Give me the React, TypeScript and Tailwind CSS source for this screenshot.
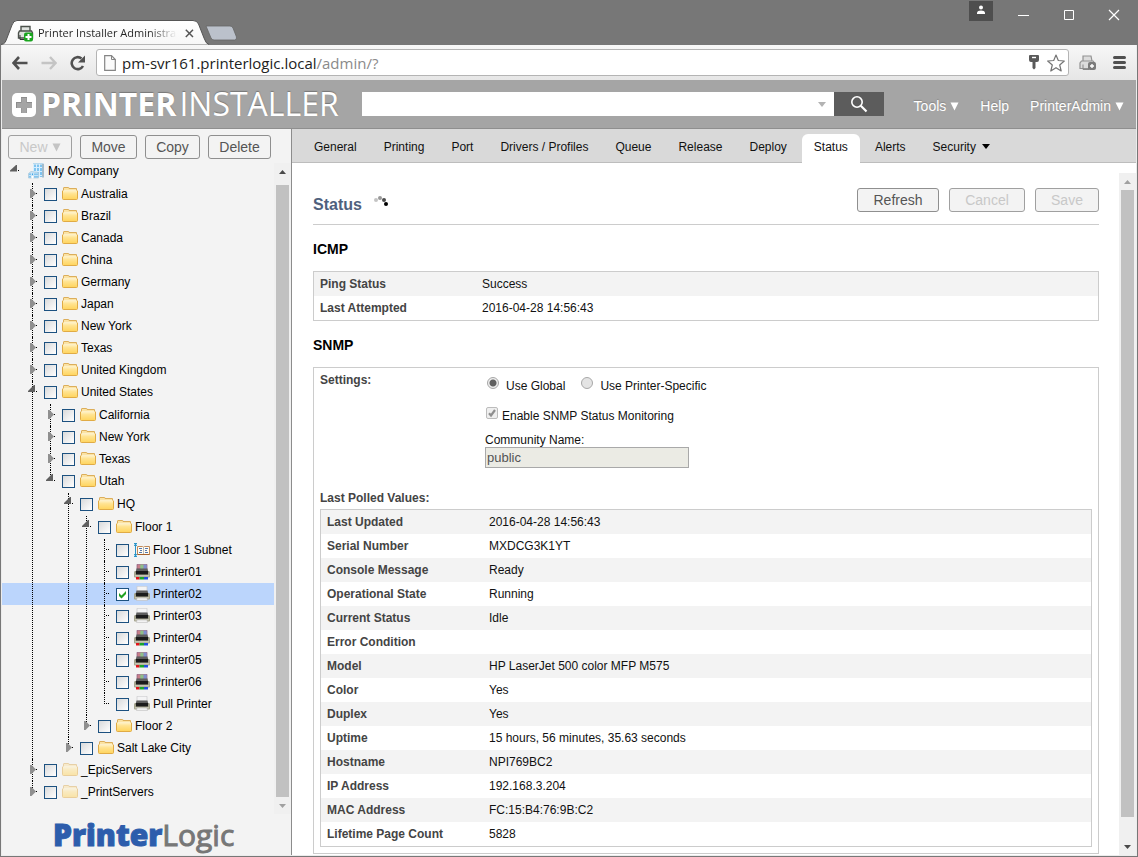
import React from "react";

type IconKind = "company" | "folder" | "faded" | "subnet" | "color" | "mono";

interface TreeNode {
  name: string;
  icon: IconKind;
  collapsed?: boolean;
  checked?: boolean;
  children?: TreeNode[];
}

const folder = (name: string): TreeNode => ({ name, icon: "folder", collapsed: true });

const regions: TreeNode[] = [
  folder("Australia"),
  folder("Brazil"),
  folder("Canada"),
  folder("China"),
  folder("Germany"),
  folder("Japan"),
  folder("New York"),
  folder("Texas"),
  folder("United Kingdom"),
  {
    name: "United States",
    icon: "folder",
    children: [
      folder("California"),
      folder("New York"),
      folder("Texas"),
      {
        name: "Utah",
        icon: "folder",
        children: [
          {
            name: "HQ",
            icon: "folder",
            children: [
              {
                name: "Floor 1",
                icon: "folder",
                children: [
                  { name: "Floor 1 Subnet", icon: "subnet" },
                  { name: "Printer01", icon: "color" },
                  { name: "Printer02", icon: "mono", checked: true },
                  { name: "Printer03", icon: "mono" },
                  { name: "Printer04", icon: "color" },
                  { name: "Printer05", icon: "color" },
                  { name: "Printer06", icon: "color" },
                  { name: "Pull Printer", icon: "mono" },
                ],
              },
              folder("Floor 2"),
            ],
          },
          folder("Salt Lake City"),
        ],
      },
    ],
  },
  { name: "_EpicServers", icon: "faded", collapsed: true },
  { name: "_PrintServers", icon: "faded", collapsed: true },
];

function NodeIcon({ kind }: { kind: IconKind }) {
  if (kind === "folder" || kind === "faded") {
    return (
      <svg width="16" height="16" viewBox="0 0 16 16" className={kind === "faded" ? "opacity-50" : ""}>
        <defs>
          <linearGradient id="fold" x1="0" y1="0" x2="0" y2="1">
            <stop offset="0" stopColor="#fff3cc" />
            <stop offset=".35" stopColor="#ffe391" />
            <stop offset="1" stopColor="#ffd45c" />
          </linearGradient>
        </defs>
        <path d="M1.500 5V2Q1.500 1.500 2 1.500H6.500Q7 1.500 7 2V2.500H14.500V5Z" fill="#fbe3a4" stroke="#dcae5b" />
        <path d="M.5 5Q.5 4.500 1.500 4.500H14.500Q15.500 4.500 15.500 5V12.500Q15.500 13.500 14.500 13.500H1.500Q.5 13.500.5 12.500Z" fill="url(#fold)" stroke="#e0ab45" />
        <path d="M1.500 4.500H14.500" stroke="#fdf0c8" />
      </svg>
    );
  }
  if (kind === "subnet") {
    return (
      <svg width="16" height="16" viewBox="0 0 16 16">
        <path d="M1.500 1V15M0 1.500H3M0 14.500H3M.3 4L1.500 2L2.700 4M.3 12L1.500 14L2.700 12" stroke="#2994c8" fill="none" />
        <path d="M3.500 4.500H8.500L9.500 5.200L10.500 4.500H15.500V12.500H3.500Z" fill="#fffaf0" stroke="#c08a5a" />
        <path d="M3.500 12.500H15.500" stroke="#a5612c" />
        <path d="M5 6.500H8M6 8.500H8M5 10.500H8M11 6.500H14M11 8.500H13M11 10.500H14" stroke="#5378ae" />
        <path d="M9.500 5V12" stroke="#a9a9a9" strokeWidth=".8" />
      </svg>
    );
  }
  if (kind === "company") {
    return (
      <svg width="16" height="16" viewBox="0 0 16 16">
        <path d="M5 .5H15.500V14H5Z" fill="#7fc4f0" />
        <path d="M5 .5H15.500V2H5Z" fill="#b9d9ec" />
        <path d="M5.500 1V9M8.500 1V14M11.500 1V14M5 4.500H15M5 8.500H15M10 12.500H15" stroke="#d8efff" />
        <path d="M15 1V14.500" stroke="#a5bccb" strokeWidth="2" />
        <path d="M.5 10.500L3 8.500L10.500 9.500V15H.5Z" fill="#c8e4f7" stroke="#a4c4d9" strokeWidth=".7" />
        <path d="M2 10.500V12M4.500 10.500V12M7 10.500V12M9 10.500V12M2 13V14.500M7 13V14.500M9 13V14.500" stroke="#3fa5e4" />
        <path d="M3.500 13H5.500V15.500H3.500Z" fill="#fff" />
      </svg>
    );
  }
  const color = kind === "color";
  return (
    <svg width="16" height="16" viewBox="0 0 16 16">
      <path d="M3 .3H13V5H3Z" fill={color ? "#c67f88" : "#f4f4f5"} stroke={color ? "#8a5a80" : "#c9c9cc"} strokeWidth=".7" />
      {color && <path d="M6.300.6H9.600V5H6.300Z" fill="#8cc08a" />}
      {color && <path d="M9.600.6H12.700V5H9.600Z" fill="#7c90d0" />}
      <path d="M1 7Q0 7 0 8.500V12.500Q0 13.500 1 13.500H15Q16 13.500 16 12.500V8.500Q16 7 15 7Z" fill="#a5a48e" />
      <path d="M2.500 4.500H13.500L14.500 8.500H1.500Z" fill="#5e5e5e" />
      <path d="M2 7H14V10.500H2Z" fill="#1c1c1c" />
      <path d="M1 11H15V12.500H1Z" fill="#c6c5b3" />
      {color ? (
        <>
          <path d="M2 13H5.600V15.500H2Z" fill="#e31219" />
          <path d="M5.600 13H10V15.500H5.600Z" fill="#19a52c" />
          <path d="M10 13H14V15.500H10Z" fill="#234fe0" />
        </>
      ) : (
        <path d="M3 12H13L13.500 14.500H2.500Z" fill="#f3f3f3" stroke="#b4b4b4" strokeWidth=".5" />
      )}
    </svg>
  );
}

function Twisty({ node }: { node: TreeNode }) {
  return (
    <svg width="14" height="22" viewBox="0 0 14 22" className="relative z-20 overflow-visible">
      {node.collapsed && <path d="M0 6H1.500L6 10.500L1.500 15H0Z" fill="#8f8f8f" />}
      {node.children && <path d="M-2 11H5V4H4L-2 10Z" fill="#606060" />}
      {node.collapsed || node.children ? (
        <path d="M6 10H7V11H6Z" fill="#000" />
      ) : (
        <path d="M4 10H5V11H4ZM6 10H7V11H6Z" fill="#000" />
      )}
    </svg>
  );
}

function Branch({ nodes, depth }: { nodes: TreeNode[]; depth: number }) {
  const indent = 10 + depth * 18;
  return (
    <ul className="pt-px">
      {nodes.map((node, i) => {
        const id = `node-${depth}-${node.name.replace(/\s/g, "")}`;
        return (
          <li key={node.name} className="relative">
            <span
              className={
                i === nodes.length - 1
                  ? "absolute top-0 z-10 h-[11px] border-l border-dotted border-black"
                  : "absolute top-0 z-10 h-full border-l border-dotted border-black"
              }
              style={{ left: indent + 2 }}
            />
            <div
              className={node.checked ? "flex h-[22px] items-center bg-[#bbd5fc]" : "flex h-[22px] items-center"}
              style={{ paddingLeft: indent }}
            >
              <Twisty node={node} />
              <span className="relative mt-px flex">
                <input
                  id={id}
                  type="checkbox"
                  defaultChecked={node.checked}
                  className="size-[13px] appearance-none border border-[#1c5180] bg-linear-to-br from-[#d9dadb] to-white checked:from-white"
                />
                {node.checked && (
                  <svg width="13" height="13" viewBox="0 0 13 13" className="pointer-events-none absolute inset-0">
                    <path d="M3 5L5.500 7.500L10 3V6L5.500 10.500L3 8Z" fill="#21a121" />
                  </svg>
                )}
              </span>
              <label htmlFor={id} className="ml-[5px] flex items-center gap-[3px]">
                <NodeIcon kind={node.icon} />
                {node.name}
              </label>
            </div>
            {node.children && <Branch nodes={node.children} depth={depth + 1} />}
          </li>
        );
      })}
    </ul>
  );
}

function Button({ children, disabled, className }: { children: React.ReactNode; disabled?: boolean; className: string }) {
  return (
    <button
      disabled={disabled}
      className={`h-6 rounded-[3px] border border-[#8f8f8f] bg-[#f3f3f3] text-sm leading-5 text-[#555] disabled:border-[#a0a0a0] disabled:text-[#c8c8c8] ${className}`}
    >
      {children}
    </button>
  );
}

function Arrow({ up, color }: { up?: boolean; color: string }) {
  return (
    <svg width="17" height="17" viewBox="0 0 17 17">
      <path d={up ? "M5 11L8.5 7L12 11Z" : "M5 7L8.5 11L12 7Z"} fill={color} />
    </svg>
  );
}

function Caption() {
  return (
    <div className="flex h-[45px] items-start bg-[#777]">
      <div className="relative h-[45px] w-[208px]">
        <svg width="208" height="45" viewBox="0 0 208 45" className="absolute inset-0">
          <defs>
            <linearGradient id="tab" x1="0" y1="0" x2="0" y2="1">
              <stop offset="0" stopColor="#fff" />
              <stop offset="1" stopColor="#f7f7f7" />
            </linearGradient>
          </defs>
          <path d="M0 44.5C4 44 4.500 42 6 38L11 25Q12.500 20.500 16 20.500H192Q196 20.500 197.500 24L203 38Q205 44 208 44.500" fill="url(#tab)" stroke="#555" />
        </svg>
        <div className="relative mt-6 flex items-center pl-4">
          <svg width="17" height="17" viewBox="0 0 17 17" className="shrink-0">
            <path d="M4 6V1.500H13V6M2.500 6H14.500L15.500 8V13H1.500V8Z" fill="#dfe3df" stroke="#4b514b" strokeWidth="1.400" />
            <path d="M3 10V14.500H8" fill="none" stroke="#333" />
            <rect x="7" y="7.500" width="9" height="9" rx="2" fill="#19a51e" />
            <path d="M11.500 9V15M8.500 12H14.500" stroke="#fff" strokeWidth="2" />
          </svg>
          <span className="ml-1 w-[139px] bg-linear-to-r from-[#222] from-80% to-transparent bg-clip-text font-['Open_Sans',sans-serif] text-[11px] leading-[18px] whitespace-nowrap text-transparent">
            Printer Installer Administra
          </span>
          <button aria-label="Close tab" className="ml-2">
            <svg width="9" height="9" viewBox="0 0 9 9">
              <path d="M.8.8L8 8M8 .8L.8 8" stroke="#555" strokeWidth="1.500" />
            </svg>
          </button>
        </div>
      </div>
      <button aria-label="New tab" className="-ml-1 mt-[25px]">
        <svg width="32" height="16" viewBox="0 0 32 16">
          <path d="M1 1H25Q27 1 28 3L31.500 12Q32 15 29.500 15H9Q7 15 6 13Z" fill="#bbc1cb" stroke="#666" strokeWidth=".8" />
        </svg>
      </button>
      <div className="flex-1" />
      <button aria-label="Profile" className="flex h-[21px] w-6 justify-center bg-[#4e4e4e] pt-[5px]">
        <svg width="10" height="10" viewBox="0 0 10 10" fill="#fff">
          <circle cx="5" cy="2.600" r="2" />
          <path d="M1 9V7.500Q1.500 5.500 5 5.500T9 7.500V9Z" />
        </svg>
      </button>
      <div className="flex gap-[33px] pt-[9px] pr-[17px] pl-[25px]">
        <button aria-label="Minimize">
          <svg width="12" height="12"><path d="M0 6.500H11" stroke="#fff" /></svg>
        </button>
        <button aria-label="Maximize">
          <svg width="12" height="12"><path d="M1.500 1.500H10.500V10.500H1.500Z" stroke="#fff" fill="none" /></svg>
        </button>
        <button aria-label="Close">
          <svg width="12" height="12"><path d="M1 1L11 11M11 1L1 11" stroke="#fff" strokeWidth="1.200" /></svg>
        </button>
      </div>
    </div>
  );
}

function AddressBar() {
  return (
    <div className="flex h-[35px] items-center bg-linear-to-b from-[#f7f7f7] to-[#e6e6e6] pr-[10px] pl-[10px]">
      <button aria-label="Back">
        <svg width="16" height="14" viewBox="0 0 16 14"><path d="M7 1L1.500 7L7 13M2 7H15.500" fill="none" stroke="#505050" strokeWidth="2.600" /></svg>
      </button>
      <button aria-label="Forward" className="ml-[13px]">
        <svg width="16" height="14" viewBox="0 0 16 14"><path d="M9 1L14.500 7L9 13M14 7H.5" fill="none" stroke="#c4c4c4" strokeWidth="2.400" /></svg>
      </button>
      <button aria-label="Reload" className="ml-3">
        <svg width="18" height="16" viewBox="0 0 18 16">
          <path d="M14 11A6 6 0 1 1 12.500 3.500" fill="none" stroke="#505050" strokeWidth="2.600" />
          <path d="M16 .5V7.500H9Z" fill="#505050" />
        </svg>
      </button>
      <div className="ml-[9px] flex h-[27px] flex-1 items-center rounded-[3px] border border-[#b4b4b4] bg-white pr-[3px] pl-[7px]">
        <svg width="12" height="16" viewBox="0 0 12 16">
          <path d="M.7.7H7.500L11.300 4.500V15.300H.7Z" fill="#fbfbfb" stroke="#858585" strokeWidth="1.200" />
          <path d="M7.500.7V4.500H11.300" fill="none" stroke="#858585" />
        </svg>
        <div className="ml-1.5 flex-1 font-['Open_Sans',sans-serif] text-[15px] leading-5 text-[#222]">
          pm-svr161.printerlogic.local<span className="text-[#8a8a8a]">/admin/?</span>
        </div>
        <svg width="10" height="15" viewBox="0 0 10 15" className="mr-2">
          <path d="M1 0H9Q10 0 10 1V5Q10 7 8 7H6.500V13L5 14.500L3.500 13V7H2Q0 7 0 5V1Q0 0 1 0Z" fill="#5a5a5a" />
          <path d="M3 2.500H7" stroke="#fff" strokeWidth="1.400" />
        </svg>
        <svg width="18" height="18" viewBox="0 0 18 18">
          <path d="M9 1L11.300 6.500L17.300 7L12.700 11L14.200 17L9 13.700L3.800 17L5.300 11L.7 7L6.700 6.500Z" fill="#fff" stroke="#747474" strokeWidth="1.200" strokeLinejoin="round" />
        </svg>
      </div>
      <button aria-label="Printer extension" className="ml-[10px]">
        <svg width="18" height="16" viewBox="0 0 18 16">
          <path d="M4 6V1H12L13 6M2.500 6H14L15.500 8V13.500H1V8Z" fill="#dcdcdc" stroke="#929292" strokeWidth="1.200" />
          <path d="M4 9.500V14.500H10" fill="none" stroke="#888" />
          <rect x="9" y="7" width="8" height="8" rx="2" fill="#7b7b7b" />
          <path d="M13 9V13M11 11H15" stroke="#fff" strokeWidth="1.400" />
        </svg>
      </button>
      <button aria-label="Menu" className="ml-4">
        <svg width="13" height="13" viewBox="0 0 13 13">
          <path d="M1.500 1.500H11.500M1.500 6.500H11.500M1.500 11.500H11.500" stroke="#505050" strokeWidth="3" strokeLinecap="round" />
        </svg>
      </button>
    </div>
  );
}

function Banner() {
  return (
    <header className="flex h-[49px] items-center border-b border-[#8f8f8f] bg-[#a5a5a5] text-white">
      <div className="flex w-[360px] shrink-0 items-center pl-[10px]">
        <svg width="25" height="25" viewBox="0 0 25 25">
          <rect y="1" width="24" height="24" rx="5" fill="#fff" />
          <path d="M12 5V21M4 13H20" stroke="#8c8c8c" strokeWidth="6" />
          <path d="M12 6V21M5 13.500H20" stroke="#a5a5a5" strokeWidth="5" />
        </svg>
        <span className="ml-1 font-['Open_Sans',sans-serif] text-[32px] leading-9 font-bold [text-shadow:0_-1px_1px_#777]">PRINTER</span>
        <span className="ml-[3px] font-['Open_Sans',sans-serif] text-[32px] leading-9 [text-shadow:0_-1px_1px_#777]">INSTALLER</span>
      </div>
      <div className="flex h-6 flex-1">
        <div className="relative flex-1">
          <input aria-label="Search" className="h-6 w-full bg-white px-2 text-sm text-black outline-none" />
          <svg width="8" height="5" viewBox="0 0 8 5" className="absolute top-[10px] right-2"><path d="M0 0H8L4 5Z" fill="#b3b3b3" /></svg>
        </div>
        <button aria-label="Run search" className="flex w-[50px] items-center justify-center bg-[#5c5c5c]">
          <svg width="18" height="18" viewBox="0 0 18 18" fill="none" stroke="#fff">
            <circle cx="7" cy="7" r="5.200" strokeWidth="1.600" />
            <path d="M10.800 10.800L16.500 16.500" strokeWidth="2.200" />
          </svg>
        </button>
      </div>
      <nav className="flex gap-[21px] pt-1 pr-3 pl-[30px] text-sm [text-shadow:0_-1px_1px_#888]">
        {["Tools", "Help", "PrinterAdmin"].map((item) => (
          <a key={item} href="#" className="flex items-center gap-1">
            {item}
            {item !== "Help" && <svg width="9" height="9" viewBox="0 0 9 9"><path d="M.5.5H8.500L4.500 8.500Z" fill="#fff" /></svg>}
          </a>
        ))}
      </nav>
    </header>
  );
}

function Sidebar() {
  return (
    <aside className="flex w-[290px] shrink-0 flex-col border-r border-[#8c8c8c] bg-[#f3f3f3]">
      <div className="flex shrink-0 gap-2 px-1.5 pt-1.5 pb-1">
        <Button disabled className="flex w-16 items-center justify-center gap-1">
          New
          <svg width="9" height="9" viewBox="0 0 9 9"><path d="M.5.5H8.500L4.500 8.500Z" fill="#c4c4c4" /></svg>
        </Button>
        <Button className="w-[57px]">Move</Button>
        <Button className="w-[55px]">Copy</Button>
        <Button className="w-[63px]">Delete</Button>
      </div>
      <div className="flex min-h-0 flex-1">
        <div className="min-w-0 flex-1 overflow-hidden text-xs">
          <div className="flex h-[19px] items-start pl-2">
            <svg width="18" height="16" viewBox="0 0 18 16">
              <path d="M0 8.500H7V2H6L0 7.500Z" fill="#606060" />
              <path d="M8 7H9V8H8Z" fill="#000" />
            </svg>
            <span className="flex items-center gap-1">
              <NodeIcon kind="company" />
              My Company
            </span>
          </div>
          <Branch nodes={regions} depth={1} />
        </div>
        <div className="flex w-[17px] shrink-0 flex-col items-center bg-[#f0f0f0]">
          <Arrow up color="#4a4a4a" />
          <div className="mt-[5px] w-[13px] flex-1 bg-[#c1c1c1]" />
          <Arrow color="#a0a0a0" />
        </div>
      </div>
      <div className="h-[41px] shrink-0 pl-[51px] font-['Open_Sans',sans-serif] text-[30px] leading-[41px] whitespace-nowrap">
        <span className="font-extrabold text-[#2d5dac] [-webkit-text-stroke:1px_#2d5dac]">Printer</span>
        <span className="text-[#777] [-webkit-text-stroke:1px_#777]">Logic</span>
      </div>
    </aside>
  );
}

const tabs = ["General", "Printing", "Port", "Drivers / Profiles", "Queue", "Release", "Deploy", "Status", "Alerts", "Security"];

function Tabs() {
  return (
    <nav className="flex h-[34px] shrink-0 items-end gap-[3px] border-b border-[#bdbdbd] bg-[#d9d9d9] pl-[10px] text-xs text-[#111]">
      {tabs.map((tab) => (
        <a
          key={tab}
          href="#"
          className={
            tab === "Status"
              ? "-mb-px flex h-[29px] items-center rounded-t-md bg-white px-3 pb-1"
              : "flex h-7 items-center gap-1.5 px-3 pb-[3px]"
          }
        >
          {tab}
          {tab === "Security" && <svg width="8" height="5" viewBox="0 0 8 5"><path d="M0 0H8L4 5Z" fill="#000" /></svg>}
        </a>
      ))}
    </nav>
  );
}

function DataTable({ rows }: { rows: [string, string][] }) {
  return (
    <div className="border border-[#ccc]">
      <table className="w-full border-collapse">
        <tbody>
          {rows.map(([label, value]) => (
            <tr key={label} className="h-6 odd:bg-[#f3f3f3]">
              <th scope="row" className="w-[162px] pl-1.5 text-left font-bold text-[#444]">{label}</th>
              <td className="pl-1.5 text-[#111]">{value}</td>
            </tr>
          ))}
        </tbody>
      </table>
    </div>
  );
}

const polled: [string, string][] = [
  ["Last Updated", "2016-04-28 14:56:43"],
  ["Serial Number", "MXDCG3K1YT"],
  ["Console Message", "Ready"],
  ["Operational State", "Running"],
  ["Current Status", "Idle"],
  ["Error Condition", ""],
  ["Model", "HP LaserJet 500 color MFP M575"],
  ["Color", "Yes"],
  ["Duplex", "Yes"],
  ["Uptime", "15 hours, 56 minutes, 35.63 seconds"],
  ["Hostname", "NPI769BC2"],
  ["IP Address", "192.168.3.204"],
  ["MAC Address", "FC:15:B4:76:9B:C2"],
  ["Lifetime Page Count", "5828"],
];

function Radio({ label, checked }: { label: string; checked?: boolean }) {
  const id = label.replace(/\W/g, "");
  return (
    <div className="flex items-start">
      <input
        id={id}
        type="radio"
        name="scope"
        disabled
        defaultChecked={checked}
        className="size-3 appearance-none rounded-full border border-[#a8a8a8] bg-[#e4e4e4] checked:bg-[radial-gradient(circle,#606060_0_3px,#eee_4px)]"
      />
      <label htmlFor={id} className="mt-0.5 ml-[7px] leading-[14px]">{label}</label>
    </div>
  );
}

function Settings() {
  return (
    <div className="flex text-[#111]">
      <div className="w-[165px] shrink-0 pt-[5px] font-bold leading-[14px] text-[#444]">Settings:</div>
      <div>
        <div className="flex gap-4 pt-[9px] pl-0.5">
          <Radio label="Use Global" checked />
          <Radio label="Use Printer-Specific" />
        </div>
        <div className="mt-[14px] flex items-start pl-px">
          <span className="relative flex">
            <input id="monitor" type="checkbox" disabled defaultChecked className="size-3 appearance-none rounded-xs border border-[#bcbcbc] bg-[#efefef]" />
            <svg width="12" height="12" viewBox="0 0 12 12" className="pointer-events-none absolute inset-0">
              <path d="M3 6.300L5 8.500L9 3" fill="none" stroke="#8f8f8f" strokeWidth="2.200" />
            </svg>
          </span>
          <label htmlFor="monitor" className="mt-0.5 ml-1 leading-[14px]">Enable SNMP Status Monitoring</label>
        </div>
        <div className="mt-[10px] flex flex-col items-start">
          <label htmlFor="community" className="leading-[14px]">Community Name:</label>
          <input id="community" disabled defaultValue="public" className="h-[21px] w-[204px] border border-[#a9a9a9] bg-[#ebebe4] px-px text-[13px] text-[#545454]" />
        </div>
      </div>
    </div>
  );
}

function Spinner() {
  return (
    <svg width="16" height="16" viewBox="0 0 16 16">
      <circle cx="2" cy="5" r="2" fill="#c4c4c4" />
      <circle cx="6" cy="3" r="2" fill="#999" />
      <circle cx="10" cy="5" r="2" fill="#4c4c4c" />
      <circle cx="12" cy="9" r="2" fill="#000" />
    </svg>
  );
}

export default function App() {
  return (
    <div className="flex h-screen flex-col overflow-hidden border border-[#777] bg-white font-['Liberation_Sans',Arial,sans-serif] text-xs text-black">
      <div className="-mt-px shrink-0">
        <Caption />
      </div>
      <div className="flex min-h-0 flex-1 flex-col border-x border-b border-[#ececec]">
        <AddressBar />
        <Banner />
        <div className="flex min-h-0 flex-1">
          <Sidebar />
          <div className="flex min-w-0 flex-1 flex-col">
            <Tabs />
            <div className="flex min-h-0 flex-1 pt-[10px]">
              <main className="min-w-0 flex-1 overflow-hidden pr-5 pl-[21px]">
                <div className="flex h-[52px] items-start border-b border-[#ccc] pt-[15px]">
                  <h1 className="mt-[7px] text-base leading-5 font-bold text-[#4f607d]">Status</h1>
                  <span className="mt-[7px] ml-3 flex-1"><Spinner /></span>
                  <div className="flex gap-[10px]">
                    <Button className="w-[82px]">Refresh</Button>
                    <Button disabled className="w-[76px]">Cancel</Button>
                    <Button disabled className="w-16">Save</Button>
                  </div>
                </div>
                <h2 className="pt-[14px] pb-3 text-sm leading-5 font-bold">ICMP</h2>
                <DataTable rows={[["Ping Status", "Success"], ["Last Attempted", "2016-04-28 14:56:43"]]} />
                <h2 className="pt-[14px] pb-3 text-sm leading-5 font-bold">SNMP</h2>
                <section className="border border-[#ccc] px-1.5 pb-1.5">
                  <Settings />
                  <h3 className="mt-[23px] mb-[4px] leading-[14px] font-bold text-[#444]">Last Polled Values:</h3>
                  <DataTable rows={polled} />
                </section>
              </main>
              <div className="flex w-[17px] shrink-0 flex-col items-center bg-[#f0f0f0]">
                <Arrow up color="#a0a0a0" />
                <div className="mb-[21px] w-[13px] flex-1 bg-[#c1c1c1]" />
                <Arrow color="#4a4a4a" />
              </div>
            </div>
          </div>
        </div>
      </div>
    </div>
  );
}
